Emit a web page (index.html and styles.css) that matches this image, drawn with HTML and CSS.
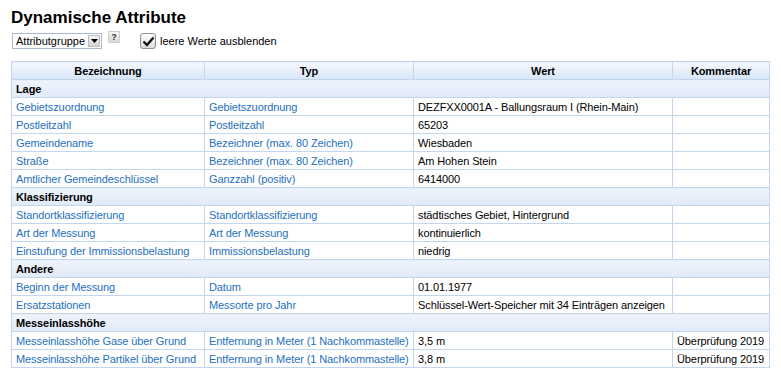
FILE: index.html
```html
<!DOCTYPE html>
<html lang="de">
<head>
<meta charset="utf-8">
<title>Dynamische Attribute</title>
<link rel="stylesheet" href="styles.css">
</head>
<body>
<div class="page">
  <h1 class="title">Dynamische Attribute</h1>
  <div class="controls">
    <div class="select"><span class="select-text">Attributgruppe</span><span class="select-btn"><svg width="7" height="4" viewBox="0 0 7 4"><path d="M0 0h7L3.5 4z" fill="#000"/></svg></span></div>
    <span class="help">?</span>
    <label class="check"><span class="box"><svg width="13" height="11" viewBox="0 0 13 11"><path d="M1.5 5.5l3.5 3.5 6.5-7.5" fill="none" stroke="#111" stroke-width="2.4" stroke-linejoin="miter"/></svg></span><span class="check-label">leere Werte ausblenden</span></label>
  </div>
  <table class="attrs">
    <colgroup><col class="c1"><col class="c2"><col class="c3"><col class="c4"></colgroup>
    <thead>
      <tr><th>Bezeichnung</th><th>Typ</th><th>Wert</th><th>Kommentar</th></tr>
    </thead>
    <tbody>
      <tr class="group"><td colspan="4">Lage</td></tr>
      <tr><td class="link">Gebietszuordnung</td><td class="link">Gebietszuordnung</td><td>DEZFXX0001A - Ballungsraum I (Rhein-Main)</td><td></td></tr>
      <tr><td class="link">Postleitzahl</td><td class="link">Postleitzahl</td><td>65203</td><td></td></tr>
      <tr><td class="link">Gemeindename</td><td class="link">Bezeichner (max. 80 Zeichen)</td><td>Wiesbaden</td><td></td></tr>
      <tr><td class="link">Straße</td><td class="link">Bezeichner (max. 80 Zeichen)</td><td>Am Hohen Stein</td><td></td></tr>
      <tr><td class="link">Amtlicher Gemeindeschlüssel</td><td class="link">Ganzzahl (positiv)</td><td>6414000</td><td></td></tr>
      <tr class="group"><td colspan="4">Klassifizierung</td></tr>
      <tr><td class="link">Standortklassifizierung</td><td class="link">Standortklassifizierung</td><td>städtisches Gebiet, Hintergrund</td><td></td></tr>
      <tr><td class="link">Art der Messung</td><td class="link">Art der Messung</td><td>kontinuierlich</td><td></td></tr>
      <tr><td class="link">Einstufung der Immissionsbelastung</td><td class="link">Immissionsbelastung</td><td>niedrig</td><td></td></tr>
      <tr class="group"><td colspan="4">Andere</td></tr>
      <tr><td class="link">Beginn der Messung</td><td class="link">Datum</td><td>01.01.1977</td><td></td></tr>
      <tr><td class="link">Ersatzstationen</td><td class="link">Messorte pro Jahr</td><td>Schlüssel-Wert-Speicher mit 34 Einträgen anzeigen</td><td></td></tr>
      <tr class="group"><td colspan="4">Messeinlasshöhe</td></tr>
      <tr><td class="link">Messeinlasshöhe Gase über Grund</td><td class="link">Entfernung in Meter (1 Nachkommastelle)</td><td>3,5 m</td><td>Überprüfung 2019</td></tr>
      <tr><td class="link">Messeinlasshöhe Partikel über Grund</td><td class="link">Entfernung in Meter (1 Nachkommastelle)</td><td>3,8 m</td><td>Überprüfung 2019</td></tr>
    </tbody>
  </table>
</div>
</body>
</html>
```
FILE: styles.css
```css
html, body { margin: 0; padding: 0; background: #fff; }
body { font-family: "Liberation Sans", Arial, sans-serif; font-size: 11px; color: #000; }
.page { padding: 8px 12px 0 11px; }
.title { margin: 0; font-size: 17px; line-height: 19px; font-weight: bold; }
.controls { display: flex; align-items: flex-start; height: 22px; margin-top: 4px; margin-bottom: 8px; }
.select { margin-top: 2px; margin-left: 1px; width: 88px; height: 14px; border: 1px solid #a9b8cc; display: flex; align-items: center; justify-content: space-between; background: #fff; }
.select-text { padding-left: 3px; font-size: 11px; line-height: 14px; }
.select-btn { width: 12px; height: 12px; margin-right: 1px; background: linear-gradient(#f4f4f4, #d2d2d2); border: 1px solid #bdbdbd; box-sizing: border-box; display: flex; align-items: center; justify-content: center; }
.help { margin-left: 6px; width: 10px; height: 10px; background: linear-gradient(#f6f6f6, #d8d8d8); border: 1px solid #cfcfcf; font-size: 9px; font-weight: bold; line-height: 10px; text-align: center; color: #333; box-sizing: content-box; }
.check { margin-left: 20px; display: flex; align-items: center; margin-top: 2px; }
.box { width: 14px; height: 14px; border: 1px solid #8f8f8f; border-radius: 3px; background: linear-gradient(#ffffff, #dcdcdc); display: flex; align-items: center; justify-content: center; }
.check-label { margin-left: 4px; font-size: 11px; }
.attrs { border-collapse: collapse; width: 759px; table-layout: fixed; }
.c1 { width: 193px; } .c2 { width: 209px; } .c3 { width: 259px; } .c4 { width: 97px; }
.attrs th, .attrs td { border: 1px solid #c4d6ee; height: 18px; padding: 0 4px; font-size: 11px; line-height: 14px; white-space: nowrap; overflow: hidden; box-sizing: border-box; letter-spacing: -0.1px; }
.attrs th { font-weight: bold; text-align: center; background: linear-gradient(#f5f9fe, #d6e5f8); }
.attrs td { text-align: left; }
.attrs .group td { font-weight: bold; background: linear-gradient(#eef4fc, #e0eaf8); }
.attrs .link { color: #2470bd; }
```
